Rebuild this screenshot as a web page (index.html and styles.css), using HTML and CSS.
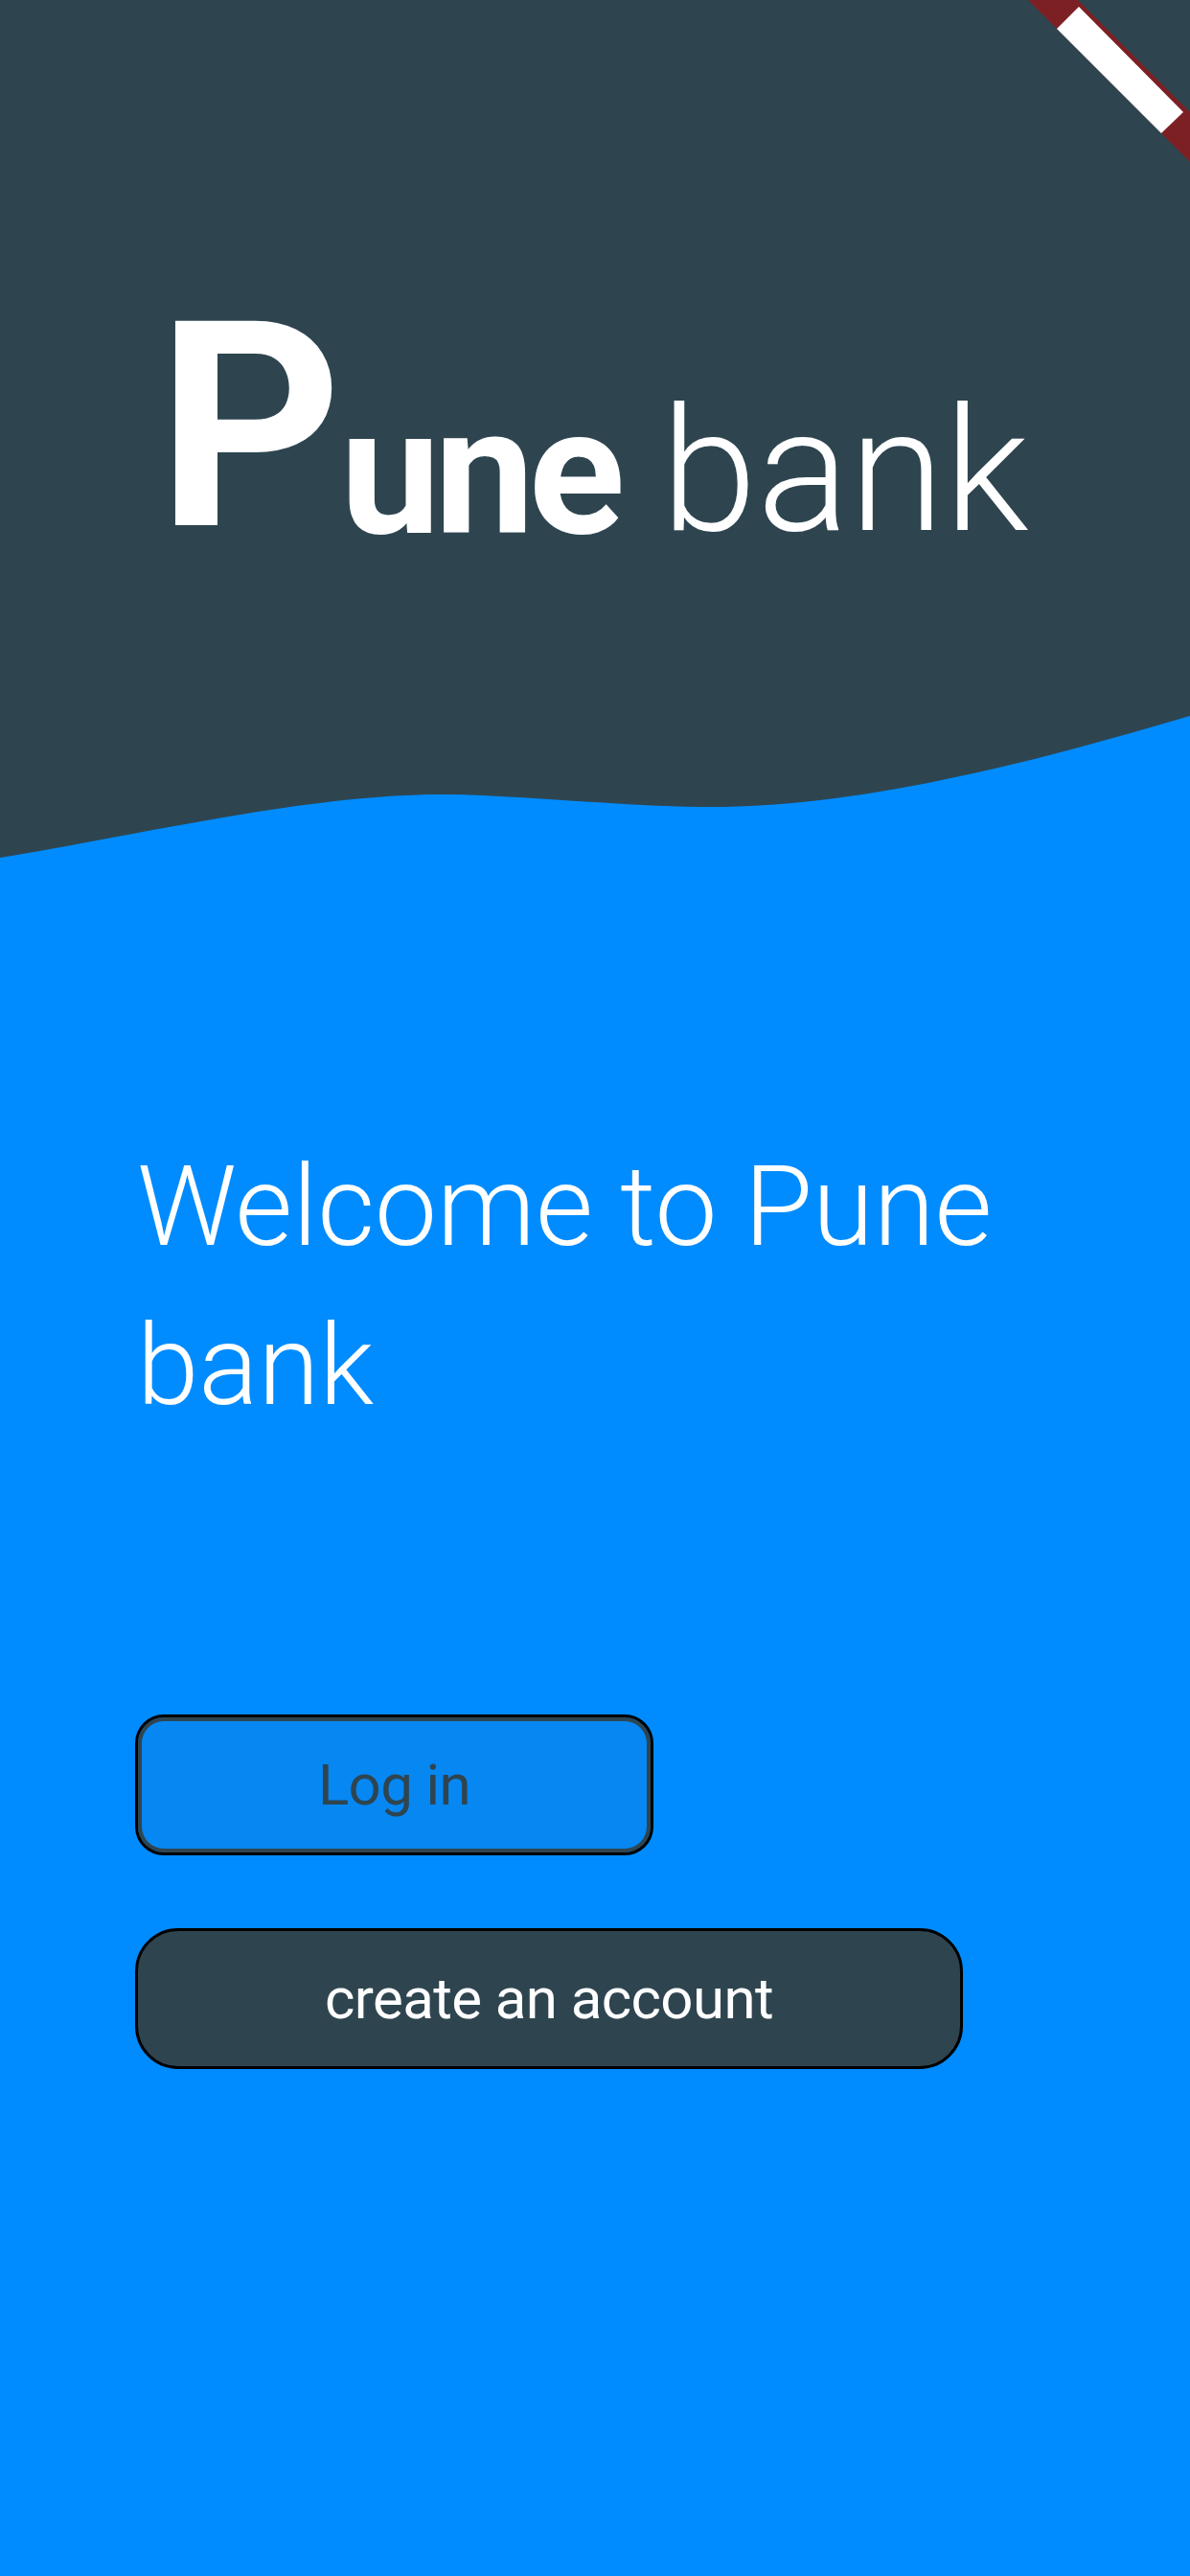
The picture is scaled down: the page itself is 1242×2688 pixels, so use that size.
FILE: index.html
```html
<!DOCTYPE html>
<html lang="en">
<head>
<meta charset="utf-8">
<title>Pune bank</title>
<link rel="stylesheet" href="styles.css">
</head>
<body>
<div class="screen">
  <header class="header">
    <div class="logo"><span class="logo-p">P</span><span class="logo-une">une</span><span class="logo-bank"> bank</span></div>
  </header>
  <svg class="wave" viewBox="0 740 1242 160" width="1242" height="160" preserveAspectRatio="none">
    <path d="M0 740 L0 895 C130 874 320 829 459 829 C540 829 650 842 745 842 C900 842 1080 795 1242 747 L1242 740 Z" fill="#2e4550"/>
  </svg>
  <main class="content">
    <h1 class="welcome">Welcome to Pune bank</h1>
    <div class="actions">
      <button class="btn btn-login">Log in</button>
      <button class="btn btn-create">create an account</button>
    </div>
  </main>
  <svg class="debug-banner" viewBox="1073 0 169 170" width="169" height="170">
    <polygon points="1073,0 1125,0 1242,117 1242,169" fill="#7d2024"/>
    <polygon points="1103,30 1126,7 1235,117 1212,139" fill="#ffffff"/>
  </svg>
</div>
</body>
</html>
```
FILE: styles.css
```css
html, body {
  margin: 0;
  padding: 0;
}
body {
  background: #008cff;
  font-family: Roboto, "Liberation Sans", sans-serif;
}
.screen {
  position: relative;
  width: 1242px;
  height: 2688px;
  overflow: hidden;
  background: #008cff;
}
.header {
  background: #2e4550;
  height: 740px;
  padding-top: 296px;
  padding-left: 164px;
  box-sizing: border-box;
}
.logo {
  color: #ffffff;
  font-size: 300px;
  line-height: 300px;
  height: 300px;
  white-space: nowrap;
}
.logo-p {
  font-size: 300px;
  font-weight: 700;
}
.logo-une {
  font-size: 186px;
  font-weight: 700;
  letter-spacing: -6px;
  vertical-align: -8px;
  margin-left: -2px;
}
.logo-bank {
  font-size: 180px;
  font-weight: 300;
  vertical-align: -5px;
}
.wave {
  display: block;
}
.content {
  padding: 276px 0 0 143px;
}
.welcome {
  margin: 0;
  width: 980px;
  color: #ffffff;
  font-size: 116px;
  line-height: 166px;
  font-weight: 300;
}
.actions {
  display: flex;
  flex-direction: column;
  align-items: flex-start;
  gap: 76px;
  margin-top: 281px;
  margin-left: -2px;
}
.btn {
  box-sizing: border-box;
  height: 147px;
  border: 3px solid #000000;
  font-family: Roboto, "Liberation Sans", sans-serif;
  font-size: 60px;
  font-weight: 400;
  letter-spacing: -0.6px;
  display: flex;
  align-items: center;
  justify-content: center;
  padding: 0;
  margin: 0;
}
.btn-login {
  width: 541px;
  border-radius: 30px;
  background: #0787f2;
  color: #2e4550;
  box-shadow: inset 0 0 0 4px #2e4550;
}
.btn-create {
  width: 864px;
  border-radius: 45px;
  background: #2e4550;
  color: #ffffff;
}
.debug-banner {
  position: absolute;
  top: 0;
  right: 0;
}
```
